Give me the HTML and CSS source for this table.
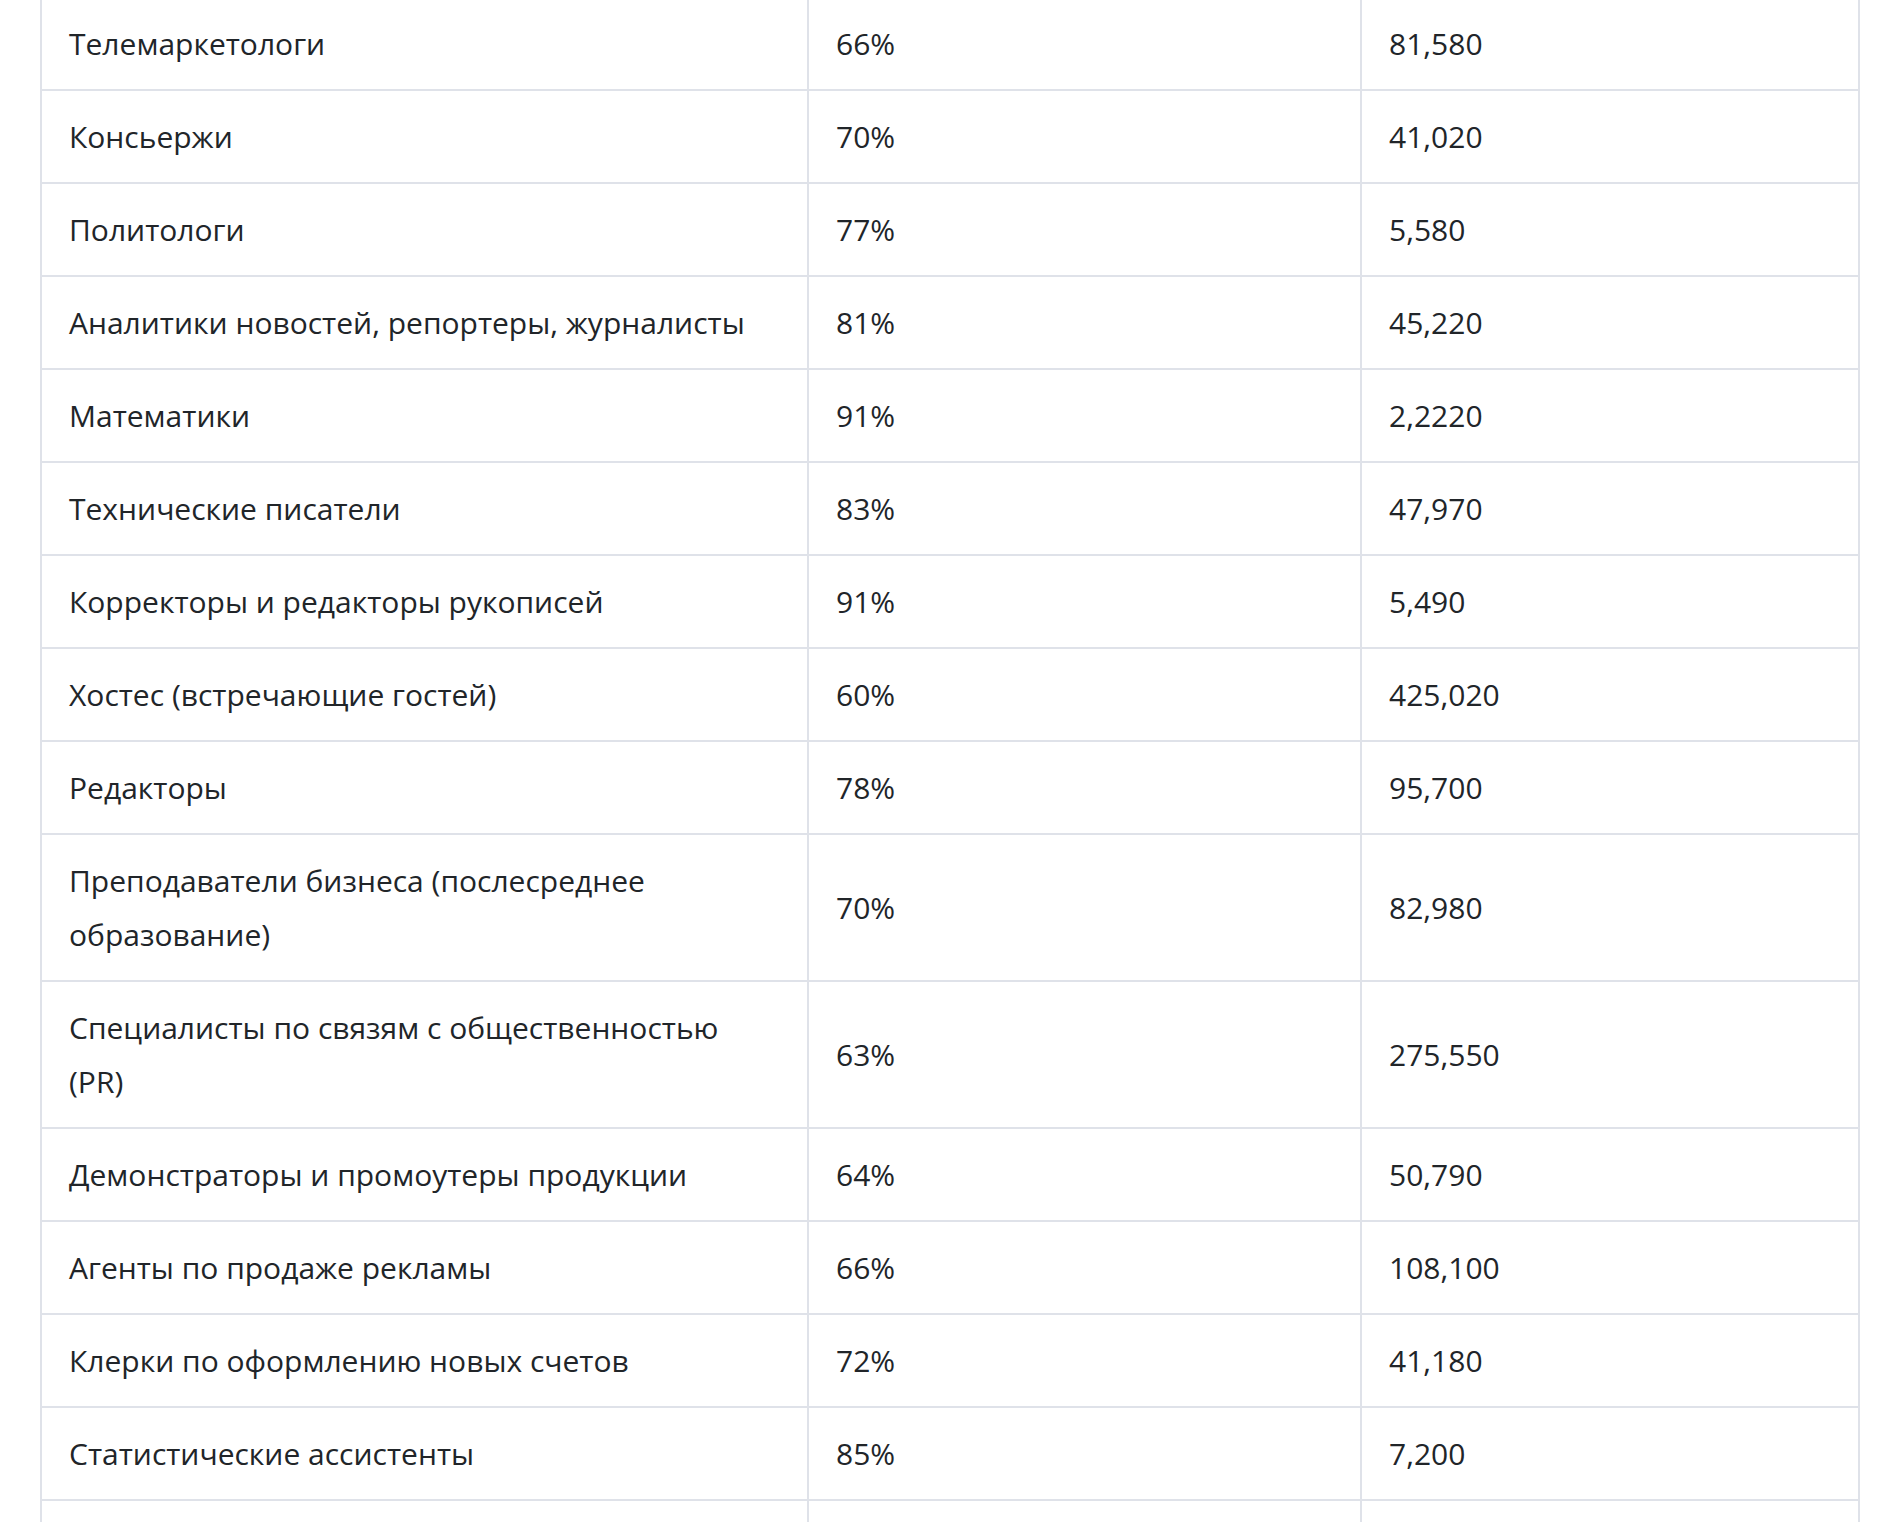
FILE: index.html
```html
<!DOCTYPE html>
<html lang="ru">
<head>
<meta charset="utf-8">
<title>Таблица профессий</title>
<link rel="stylesheet" href="styles.css">
</head>
<body>
<div class="page">
  <table class="jobs">
    <colgroup>
      <col class="c-name">
      <col class="c-pct">
      <col class="c-num">
    </colgroup>
    <tbody>
      <tr><td>Телемаркетологи</td><td>66%</td><td>81,580</td></tr>
      <tr><td>Консьержи</td><td>70%</td><td>41,020</td></tr>
      <tr><td>Политологи</td><td>77%</td><td>5,580</td></tr>
      <tr><td>Аналитики новостей, репортеры, журналисты</td><td>81%</td><td>45,220</td></tr>
      <tr><td>Математики</td><td>91%</td><td>2,2220</td></tr>
      <tr><td>Технические писатели</td><td>83%</td><td>47,970</td></tr>
      <tr><td>Корректоры и редакторы рукописей</td><td>91%</td><td>5,490</td></tr>
      <tr><td>Хостес (встречающие гостей)</td><td>60%</td><td>425,020</td></tr>
      <tr><td>Редакторы</td><td>78%</td><td>95,700</td></tr>
      <tr><td>Преподаватели бизнеса (послесреднее образование)</td><td>70%</td><td>82,980</td></tr>
      <tr><td>Специалисты по связям с общественностью (PR)</td><td>63%</td><td>275,550</td></tr>
      <tr><td>Демонстраторы и промоутеры продукции</td><td>64%</td><td>50,790</td></tr>
      <tr><td>Агенты по продаже рекламы</td><td>66%</td><td>108,100</td></tr>
      <tr><td>Клерки по оформлению новых счетов</td><td>72%</td><td>41,180</td></tr>
      <tr><td>Статистические ассистенты</td><td>85%</td><td>7,200</td></tr>
      <tr><td>&nbsp;</td><td>&nbsp;</td><td>&nbsp;</td></tr>
    </tbody>
  </table>
</div>
</body>
</html>
```

FILE: styles.css
```css
html, body {
  margin: 0;
  padding: 0;
  background: #ffffff;
}

.page {
  padding: 0 22px 0 40px;
  margin-top: -4px;
}

.jobs {
  width: 1818px;
  border-collapse: collapse;
  table-layout: fixed;
  font-family: "Open Sans", "Noto Sans", "Liberation Sans", sans-serif;
  font-size: 30px;
  line-height: 54px;
  color: #212529;
}

.c-name { width: 767px; }
.c-pct { width: 553px; }
.c-num { width: 498px; }

.jobs td {
  border: 2px solid #dfe2e9;
  padding: 19px 27px 18px 27px;
  vertical-align: middle;
  text-align: left;
}
```
